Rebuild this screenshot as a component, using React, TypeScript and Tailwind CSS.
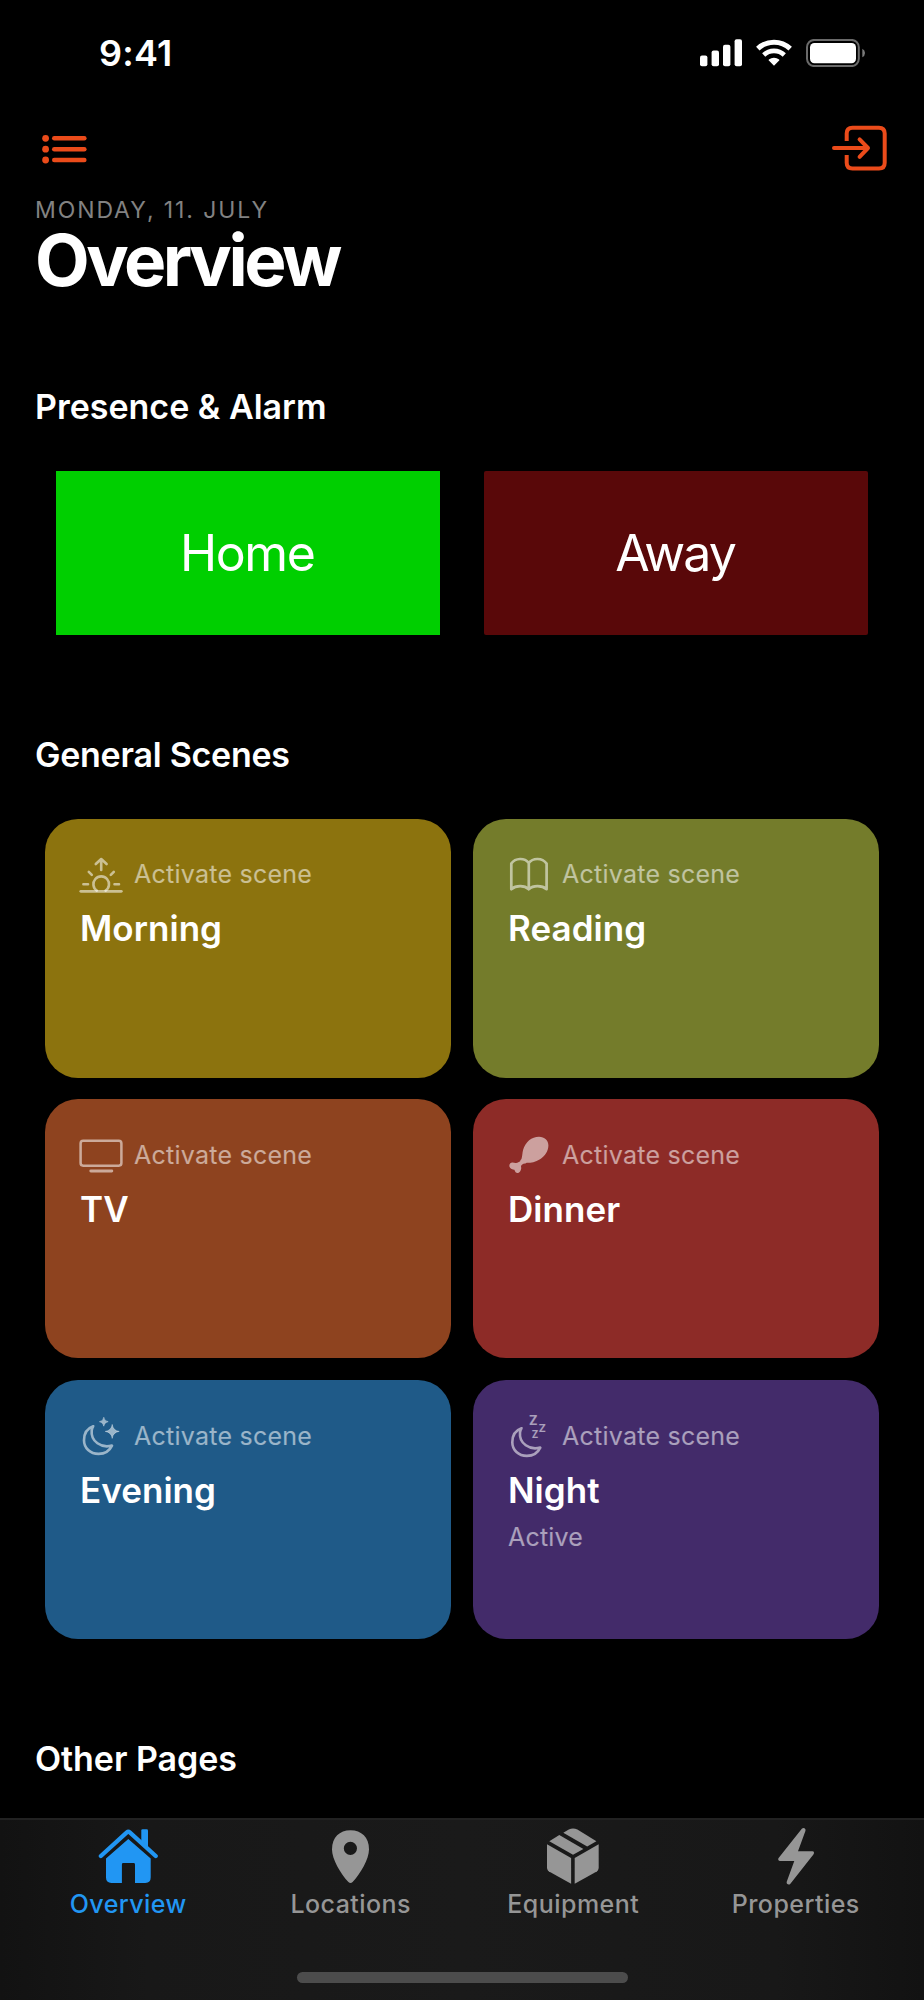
import type { ReactNode } from "react";

interface Scene {
  name: string;
  color: string;
  icon: ReactNode;
  state?: string;
}

interface Tab {
  label: string;
  icon: ReactNode;
  active?: boolean;
}

const MOON =
  "M14.2 11.2 C8 13.4 5 19 5 25.2 C5 33 11.2 38.9 19.6 38.9 C25.6 38.9 30.6 35.6 33 30.6 C22.5 33.6 11.5 26.5 12.7 15.5 C12.9 13.6 13.4 12.4 14.2 11.2 Z";

const SunriseIcon = () => (
  <svg viewBox="0 0 44 44" className="size-11" fill="none" stroke="currentColor" strokeWidth="2.6" strokeLinecap="round" strokeLinejoin="round">
    <path d="M22.2 17 V6 M16.8 11 L22.2 6 L27.6 11" />
    <path d="M9.8 18.8 L12.8 21.8 M34.8 18.8 L31.8 21.8 M4.4 31.2 H9 M35.5 31.2 H40" />
    <path d="M17.8 37.6 A7.8 7.8 0 1 1 26.6 37.6" />
    <path d="M1.8 38.3 H42.3" strokeWidth="2.8" />
  </svg>
);

const BookIcon = () => (
  <svg viewBox="0 0 44 44" className="size-11" fill="none" stroke="currentColor" strokeWidth="2.7" strokeLinecap="round" strokeLinejoin="round">
    <path d="M4.3 36.2 V10.6 C8.5 4.6 17.5 4.6 21.8 10 V36.2 C17.5 32.2 9 32.2 4.3 36.2 Z M21.8 10 C26 4.6 35 4.6 39.6 10.6 V36.2 C35 32.2 26 32.2 21.8 36.2" />
  </svg>
);

const TvIcon = () => (
  <svg viewBox="0 0 44 44" className="size-11" fill="none" stroke="currentColor" strokeLinecap="round">
    <rect x="1.6" y="6.8" width="40.8" height="24.9" rx="2.6" strokeWidth="2.5" />
    <path d="M11.8 37 H32.8" strokeWidth="2.9" />
  </svg>
);

const DrumstickIcon = () => (
  <svg viewBox="0 0 44 44" className="size-11" fill="currentColor">
    <path d="M32 2.7 C37.5 2.7 41.5 6.2 41.4 11.5 C41.3 17 38 22.2 33 25.2 C28 28.4 22.5 29 19.8 28.8 C18.6 28.8 18.8 30 17.2 29.6 C15.6 30.2 14 31.2 14 32.6 C14.6 34.6 14 36 13.2 37.2 C12.2 39.2 9.8 39.6 8.6 38.2 C7.6 37 7.8 36 7 35.6 C5.4 35.8 3 34.8 2.4 32.6 C2.2 30.8 2.6 29.4 4.4 28.8 C6 28 7.6 29.4 9.2 29 C10.8 28.6 12 27.6 13.2 27.2 C13.2 25.8 14.4 26 14.6 24.6 C15.4 22 15.2 19.2 16.2 15.6 C18.4 8 24.6 2.7 32 2.7 Z" />
  </svg>
);

const MoonStarsIcon = () => (
  <svg viewBox="0 0 44 44" className="size-11" fill="currentColor">
    <path d={MOON} fill="none" stroke="currentColor" strokeWidth="2.6" strokeLinejoin="round" />
    <path d="M24.8 2.2 Q25.3 6.2 29.2 6.7 Q25.3 7.2 24.8 11.2 Q24.3 7.2 20.4 6.7 Q24.3 6.2 24.8 2.2 Z M33.2 9.4 Q34 15.6 40.2 16.4 Q34 17.2 33.2 23.4 Q32.4 17.2 26.2 16.4 Q32.4 15.6 33.2 9.4 Z" stroke="currentColor" strokeWidth=".6" />
  </svg>
);

const MoonZzzIcon = () => (
  <svg viewBox="0 0 44 44" className="size-11 overflow-visible font-['Inter',sans-serif] font-bold" fill="currentColor">
    <path d={MOON} transform="translate(.3 2)" fill="none" stroke="currentColor" strokeWidth="2.6" strokeLinejoin="round" />
    <text x="22" y="9.7" fontSize="12.8">Z</text>
    <text x="31.8" y="16.9" fontSize="10.6">Z</text>
    <text x="24.8" y="22.9" fontSize="9.8">Z</text>
  </svg>
);

const scenes: Scene[] = [
  { name: "Morning", color: "bg-[#8c730e]", icon: <SunriseIcon /> },
  { name: "Reading", color: "bg-[#747c2b]", icon: <BookIcon /> },
  { name: "TV", color: "bg-[#8e431f]", icon: <TvIcon /> },
  { name: "Dinner", color: "bg-[#8d2b27]", icon: <DrumstickIcon /> },
  { name: "Evening", color: "bg-[#1f5a88]", icon: <MoonStarsIcon /> },
  { name: "Night", color: "bg-[#432b6a]", icon: <MoonZzzIcon />, state: "Active" },
];

const tabs: Tab[] = [
  {
    label: "Overview",
    active: true,
    icon: (
      <>
        <path d="M43.3 17 V4.6 Q43.3 3.3 44.6 3.3 H48.7 Q50 3.3 50 4.6 V24 Z" />
        <path d="M2.9 30 L28.8 6.4 Q30.3 5.2 31.8 6.4 L57.7 30" fill="none" stroke="currentColor" strokeWidth="4.3" strokeLinecap="round" />
        <path d="M30.3 13 L52.7 32.6 V51.6 Q52.7 57 47.4 57 H37 V38.4 Q37 37 35.6 37 H25.2 Q23.9 37 23.9 38.4 V57 H13.4 Q8 57 8 51.6 V32.6 Z" />
      </>
    ),
  },
  {
    label: "Locations",
    icon: (
      <path
        fillRule="evenodd"
        d="M29.5 4.3 C40.5 4.3 48 11.5 48 23.4 C48 33 39.5 47.5 31.6 56 Q29.5 58 27.4 56 C19.5 47.5 11 33 11 23.4 C11 11.5 18.5 4.3 29.5 4.3 Z M29.4 15.7 A6.6 6.6 0 1 0 29.4 28.9 A6.6 6.6 0 1 0 29.4 15.7 Z"
      />
    ),
  },
  {
    label: "Equipment",
    icon: (
      <>
        <path d="M4 18.3 L28.1 32 V57.7 L7.4 46.3 Q4 44.4 4 41.4 Z" />
        <path d="M31.7 32 L55.7 18.3 V41.4 Q55.7 44.4 52.4 46.3 L31.7 57.7 Z" />
        <path d="M6.3 15.2 L16.3 9 L40.4 23 L30 28.8 Z" />
        <path d="M20.3 6.8 L25.8 3.5 Q30 1.3 34.4 3.5 L53.4 15.2 L44.2 20.6 Z" />
      </>
    ),
  },
  {
    label: "Properties",
    icon: (
      <path d="M35.8 2.8 Q37.3 1.2 38.9 2.4 Q40 3.4 39.4 5 L32 25.3 H46.4 Q47.8 25.3 48 26.6 Q48.1 27.6 47.4 28.5 L24.4 57.7 Q22.9 59.2 21.3 58.1 Q20.2 57.1 20.8 55.5 L28.3 35 H13.8 Q12.4 35 12.2 33.6 Q12.1 32.6 12.8 31.8 Z" />
    ),
  },
];

const StatusBar = () => (
  <div className="flex h-[106px] items-center justify-between pr-[59px] pl-[99px]">
    <span className="text-[36px] font-semibold tracking-[0.2px]">9:41</span>
    <div className="flex items-center gap-3.5">
      {/* Signal */}
      <svg viewBox="0 0 42 28" className="h-7 w-[42px]" fill="white">
        <rect x="0" y="16.5" width="7.4" height="10.7" rx="2" />
        <rect x="11.6" y="11.6" width="7.4" height="15.6" rx="2" />
        <rect x="23" y="5.8" width="7.4" height="21.4" rx="2" />
        <rect x="34.6" y="0.2" width="7.4" height="27" rx="2" />
      </svg>
      {/* Wifi */}
      <svg viewBox="0 0 36 28" className="h-7 w-9" fill="none" stroke="white">
        <path d="M1.8 9.6 A23.6 23.6 0 0 1 34.2 9.6" strokeWidth="5" />
        <path d="M7.7 16 A15 15 0 0 1 28.3 16" strokeWidth="4.6" />
        <path d="M18 26.8 L12.6 21.3 Q12.4 20.9 12.9 20.5 A8 8 0 0 1 23.1 20.5 Q23.6 20.9 23.4 21.3 Z" fill="white" stroke="none" />
      </svg>
      {/* Battery */}
      <svg viewBox="0 0 59 28" className="h-7 w-[59px]">
        <rect x="1" y="0.9" width="51.8" height="26.2" rx="7.4" fill="none" stroke="#6a6a6a" strokeWidth="2" />
        <rect x="4" y="4" width="46" height="20.2" rx="4.4" fill="white" />
        <path d="M56.3 9.8 Q59 11 59 14 Q59 17 56.3 18.2 Z" fill="#7a7a7a" />
      </svg>
    </div>
  </div>
);

const NavBar = () => (
  <div className="flex h-[84px] items-center justify-between pr-9 pl-[42px] text-[#eb4b1a]">
    <svg viewBox="0 0 46 46" className="size-[46px]" fill="currentColor">
      {[13.3, 24.2, 35].map((y) => (
        <g key={y}>
          <circle cx="3.6" cy={y} r="3.4" />
          <rect x="10" y={y - 2.3} width="34.6" height="4.6" rx="2.3" />
        </g>
      ))}
    </svg>
    <svg viewBox="0 0 57 46" className="h-[46px] w-[57px]" fill="none" stroke="currentColor" strokeWidth="4">
      <path d="M15.7 16 V8.5 Q15.7 2.7 21.5 2.7 H47.9 Q53.7 2.7 53.7 8.5 V37.7 Q53.7 43.5 47.9 43.5 H21.5 Q15.7 43.5 15.7 37.7 V30" />
      <path d="M3 23 H37 M28.6 14.4 L37 23 L28.6 31.8" strokeLinecap="round" strokeLinejoin="round" />
    </svg>
  </div>
);

interface SectionTitleProps {
  children: ReactNode;
  className?: string;
}

const SectionTitle = ({ children, className = "tracking-[-0.05px]" }: SectionTitleProps) => (
  <h2 className={`pl-[35px] text-[34px] leading-10 font-semibold ${className}`}>{children}</h2>
);

const SceneCard = ({ name, color, icon, state }: Scene) => (
  <div className={`h-[259px] rounded-[33px] px-[34px] pt-[34.5px] ${color}`}>
    <div className="flex h-11 items-center gap-[11px] text-white/55">
      {icon}
      <span className="text-[25px] tracking-[0.25px]">Activate scene</span>
    </div>
    <h3 className="mt-2.5 pl-px text-[35px] leading-[42px] font-semibold tracking-[0.05px]">{name}</h3>
    {state && <p className="mt-[10.5px] pl-px text-[25px] leading-8 tracking-[0.2px] text-white/55">{state}</p>}
  </div>
);

const TabBar = () => (
  <nav className="mt-auto flex h-[182px] flex-col items-center border-t-2 border-[#222222] bg-[linear-gradient(90deg,#121212,#181818_16%,#1a1a1a_50%,#181818_84%,#121212)] px-[17px] pt-1.5">
    <div className="grid w-full grid-cols-4">
      {tabs.map(({ label, icon, active }) => (
        <div key={label} className={`flex flex-col items-center ${active ? "text-[#2196f3]" : "text-[#969696]"}`}>
          <svg viewBox="0 0 60 60" className="size-[60px]" fill="currentColor">
            {icon}
          </svg>
          <span className="mt-[3px] text-[25px] leading-[30px] font-medium tracking-[0.45px]">{label}</span>
        </div>
      ))}
    </div>
    <div className="mt-[53px] h-[11px] w-[331px] rounded-full bg-[#4c4c4c]" />
  </nav>
);

const App = () => (
  <div className="flex h-[2000px] w-[924px] flex-col overflow-hidden bg-black font-['Inter',sans-serif] text-white">
    <StatusBar />
    <NavBar />

    {/* Title */}
    <header className="pt-1.5 pl-[35px]">
      <p className="text-[23px] leading-[29px] tracking-[1.9px] text-[#828282]">MONDAY, 11. JULY</p>
      <h1 className="text-[71px] leading-[70px] font-bold tracking-[-3.5px]">Overview</h1>
    </header>

    {/* Presence */}
    <section className="mt-[92px]">
      <SectionTitle className="tracking-normal">Presence & Alarm</SectionTitle>
      <div className="mt-11 grid grid-cols-2 gap-11 px-14 text-[50px]">
        <button className="h-[164px] bg-[#00cf00] pr-[1.5px] tracking-[-1.4px]">Home</button>
        <button className="h-[164px] rounded-[2px] bg-[#590809] pr-0.5 tracking-[-2px]">Away</button>
      </div>
    </section>

    {/* Scenes */}
    <section className="mt-[99.5px]">
      <SectionTitle className="tracking-[-0.25px]">General Scenes</SectionTitle>
      <div className="mt-11 grid grid-cols-2 gap-x-[22px] gap-y-[21.75px] px-[45px]">
        {scenes.map((scene) => (
          <SceneCard key={scene.name} {...scene} />
        ))}
      </div>
    </section>

    <section className="mt-[99.5px]">
      <SectionTitle>Other Pages</SectionTitle>
    </section>

    <TabBar />
  </div>
);

export default App;
